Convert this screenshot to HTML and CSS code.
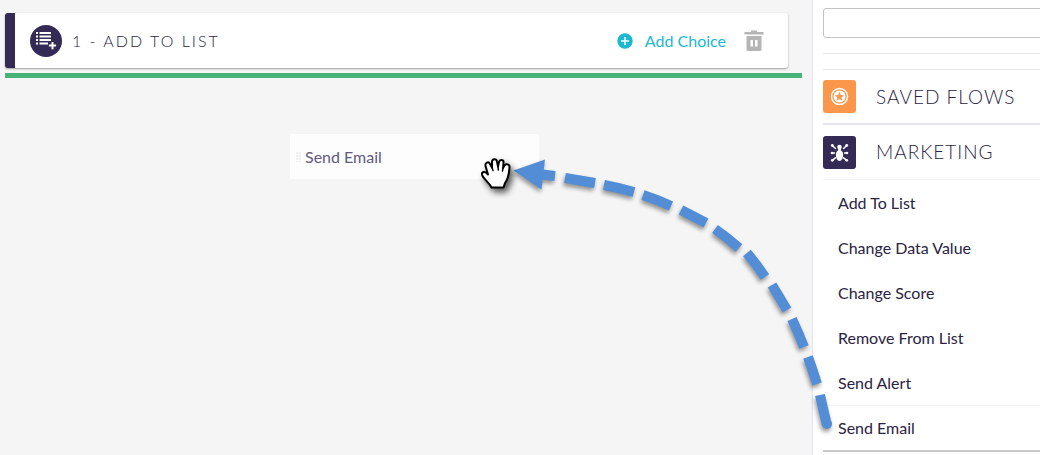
FILE: index.html
```html
<!DOCTYPE html>
<html lang="en">
<head>
<meta charset="utf-8">
<title>Flow editor</title>
<link rel="stylesheet" href="styles.css">
</head>
<body>
<div class="app">
  <main class="canvas">
    <section class="step">
      <svg class="step-icon" viewBox="0 0 32 32" aria-hidden="true">
        <circle cx="16" cy="16" r="16" fill="#332a56"/>
        <path d="M6 8h2M6 11.500h2M6 15h2M6 18.500h2M9.500 8H21M9.500 11.500H21M9.500 15H21M9.500 18.500H18" stroke="#fff" stroke-width="1.800"/>
        <path d="M22.500 17v7.200M18.900 20.600h7.200" stroke="#fff" stroke-width="2"/>
      </svg>
      <h1 class="step-title">1 - ADD TO LIST</h1>
      <button class="add-choice" type="button">
        <svg class="plus-icon" viewBox="0 0 16 16" aria-hidden="true">
          <circle cx="8" cy="8" r="7.700" fill="#1cb8d0"/>
          <path d="M8 4v8M4 8h8" stroke="#fff" stroke-width="1.500"/>
        </svg>
        <span>Add Choice</span>
      </button>
      <button class="delete" type="button" aria-label="Delete step">
        <svg class="trash-icon" viewBox="0 0 20 22" aria-hidden="true">
          <path fill="#b5b5b5" fill-rule="evenodd" d="M7 .5h6v1.500h6.500v2.500H.5V2H7zM2.500 6h15v13.500q0 1.500-1.500 1.500H4q-1.500 0-1.500-1.500zM6.500 10v6.500h2.500v-6.500zM11 10v6.500h2.500v-6.500z"/>
        </svg>
      </button>
    </section>
    <div class="drop-line"></div>
  </main>

  <aside class="sidebar">
    <input class="search" type="text" aria-label="Search">
    <div class="divider"></div>
    <nav class="groups">
      <button class="group" type="button">
        <svg class="group-icon" viewBox="0 0 33 33" aria-hidden="true">
          <rect width="33" height="33" rx="3" fill="#fa974b"/>
          <circle cx="16.500" cy="16.500" r="8" fill="none" stroke="#fff" stroke-width="1.500"/>
          <circle cx="16.500" cy="16.500" r="6" fill="#fff"/>
          <path fill="#fa974b" d="M16.500 11.800l1.300 3.100 3.400.3-2.600 2.200.8 3.300-2.900-1.800-2.900 1.800.8-3.300-2.600-2.200 3.400-.3z"/>
        </svg>
        <span>SAVED FLOWS</span>
      </button>
      <button class="group group-open" type="button">
        <svg class="group-icon" viewBox="0 0 33 33" aria-hidden="true">
          <rect width="33" height="33" rx="3" fill="#332a56"/>
          <g fill="#fff">
            <circle cx="16.500" cy="11" r="2.300"/>
            <path d="M15 11h3v3.500q2.200.8 2.200 4-.3 6-3.700 6.500-3.400-.5-3.700-6.500 0-3.200 2.200-4z"/>
            <circle cx="9.300" cy="9.500" r="1.400"/><circle cx="23.700" cy="9.500" r="1.400"/>
            <circle cx="9" cy="17" r="1.300"/><circle cx="24" cy="17" r="1.300"/>
            <circle cx="9.300" cy="24.300" r="1.400"/><circle cx="23.700" cy="24.300" r="1.400"/>
          </g>
          <path d="M9.300 9.500l3.700 3.500M23.700 9.500L20 13M9 17h3M21 17h3M9.300 24.300l3.700-3M23.700 24.300l-3.700-3" fill="none" stroke="#fff" stroke-width="1.500"/>
        </svg>
        <span>MARKETING</span>
      </button>
      <ul class="actions">
        <li class="action">Add To List</li>
        <li class="action">Change Data Value</li>
        <li class="action">Change Score</li>
        <li class="action">Remove From List</li>
        <li class="action">Send Alert</li>
        <li class="action action-active">Send Email</li>
      </ul>
    </nav>
  </aside>

  <div class="drag-ghost"><span class="grip"></span>Send Email</div>

  <svg class="drag-trail" viewBox="0 0 1040 455" width="1040" height="455" aria-hidden="true">
    <g class="trail-arrow">
      <path fill="none" stroke="#538dd5" stroke-width="10" d="M827 425Q823 409 820 395M817 384Q813 371 808 357M804 347Q799 334 792 319M787 310Q780 298 772 285M765 277Q757 265 747 253M739 248Q728 238 715 229M706 223Q695 217 681 210M671 206Q658 200 643 195M634 192Q620 188 604 185M595 183L565 178M555 176L542 174.500"/>
      <circle cx="827" cy="424" r="5" fill="#538dd5"/>
      <path fill="#538dd5" d="M513.500 170.500L545 159.500 541.500 189.500z"/>
    </g>
    <g class="trail-hand">
      <path fill="#fff" stroke="#000" stroke-width="2" stroke-linejoin="round" d="M491.500 187.500C489 182 483 179 482 174.500C481.500 171.500 485 171 487 173.500L488 174.500L485.500 166C485 162.500 488.500 161 490 164L492 167.500L492 162C492 158.500 496.500 158.500 497 161.500L498 166.500L499 162C500 159 504 159.500 503.500 163L503 168L504.500 165.500C506 163 510 164.500 509.500 167.500C509 172 509 178 505 183L503.500 187.500Z"/>
      <path fill="none" stroke="#000" stroke-width="1.500" stroke-linecap="round" d="M492 167.500l1 3M498 166l.3 4M503 168l-.5 3"/>
    </g>
  </svg>
</div>
</body>
</html>
```
FILE: styles.css
```css
* {
  box-sizing: border-box;
}

body {
  margin: 0;
  background: #f5f5f5;
  color: #2a2342;
  font: 16px/20px Lato, "Open Sans", sans-serif;
}

button {
  padding: 0;
  border: 0;
  background: none;
  font: inherit;
  color: inherit;
  cursor: pointer;
}

svg {
  display: block;
  flex: none;
}

.app {
  position: relative;
  display: grid;
  grid-template-columns: minmax(0, 1fr) 228px;
  min-height: 100vh;
  overflow: hidden;
}

.canvas {
  padding: 13px 10px 0 5px;
}

.step {
  display: flex;
  align-items: center;
  margin-right: 14px;
  height: 55px;
  padding: 0 24px 0 15px;
  border-left: 10px solid #332a56;
  border-radius: 3px;
  background: #fff;
  box-shadow: 0 1px 2px rgba(0, 0, 0, 0.35);
}

.step-icon {
  width: 32px;
  height: 32px;
}

.step-title {
  flex: 1;
  margin: 0 0 0 10px;
  font-size: 16px;
  font-weight: 300;
  letter-spacing: 2px;
}

.add-choice {
  display: flex;
  align-items: center;
  gap: 12px;
  color: #1cb8d0;
}

.plus-icon {
  width: 16px;
  height: 16px;
}

.delete {
  margin-left: 18px;
}

.trash-icon {
  width: 20px;
  height: 22px;
}

.drop-line {
  height: 5px;
  margin-top: 5px;
  background: #48b379;
}

.sidebar {
  padding: 8px 0 0 10px;
  border-left: 1px solid #e4e3ee;
  background: #fff;
}

.search {
  display: block;
  width: calc(100% + 10px);
  height: 30px;
  border: 1px solid #c4c4c4;
  border-radius: 3px;
  background: #fff;
  font: inherit;
}

.divider {
  height: 17px;
  margin-top: 15px;
  border: solid #e6e6ee;
  border-width: 1px 0;
}

.group {
  display: flex;
  align-items: center;
  gap: 20px;
  width: 100%;
  height: 55px;
  border-bottom: 2px solid #e6e6ee;
  font-size: 19px;
  font-weight: 300;
  letter-spacing: 1px;
}

.group-open {
  border-bottom: 1px solid #f3f3f6;
}

.group-icon {
  width: 33px;
  height: 33px;
}

.actions {
  margin: 0;
  padding: 0;
  list-style: none;
  border-bottom: 2px solid #c8c8c8;
}

.action {
  display: flex;
  align-items: center;
  height: 45px;
  padding-left: 15px;
}

.action-active {
  border-top: 1px solid #f3f3f6;
}

.drag-ghost {
  position: absolute;
  left: 290px;
  top: 134px;
  display: flex;
  align-items: center;
  gap: 4px;
  width: 249px;
  height: 45px;
  padding-left: 6px;
  background: #fdfdfd;
  color: #615a7c;
}

.grip {
  width: 5px;
  height: 11px;
  background: repeating-linear-gradient(#fdfdfd 0 1px, transparent 1px 3px),
    linear-gradient(90deg, #efeff1 2px, transparent 2px 3px, #efeff1 3px);
}

.drag-trail {
  position: absolute;
  left: 0;
  top: 0;
  pointer-events: none;
}

.trail-arrow {
  filter: drop-shadow(-1px 3px 2px rgba(0, 0, 0, 0.4));
}

.trail-hand {
  filter: drop-shadow(3px 4px 3px rgba(0, 0, 0, 0.65));
}
```
